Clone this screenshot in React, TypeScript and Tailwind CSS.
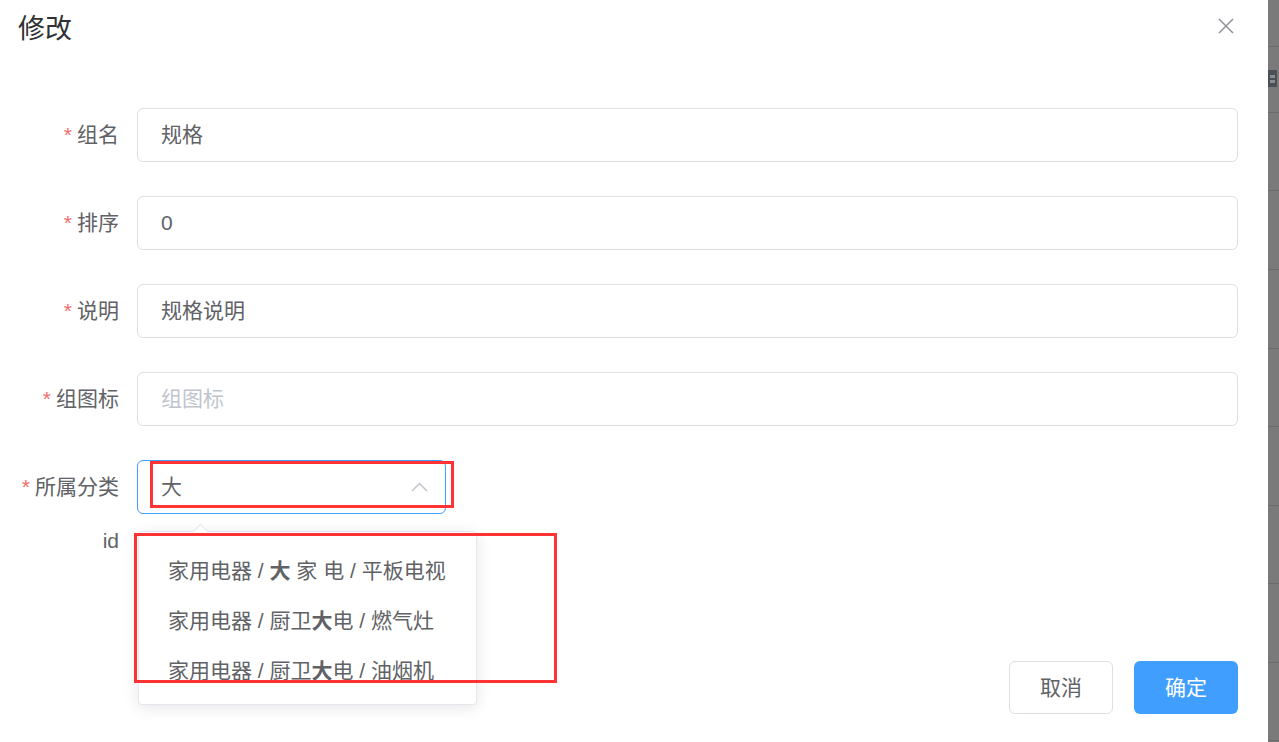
import React from "react";

const FONT = '"Liberation Sans", "Noto Sans CJK SC", sans-serif';

function Label({ text, required = true }: { text: string; required?: boolean }) {
  return (
    <div className="w-[137px] shrink-0 pr-[18px] flex items-center justify-end h-[54px] text-[21px] text-[#606266]">
      {required && <span className="text-[#F56C6C] mr-[5px]">*</span>}
      <span>{text}</span>
    </div>
  );
}

function InputRow({ label, value, placeholder }: { label: string; value?: string; placeholder?: string }) {
  return (
    <div className="flex h-[54px] mb-[34px]">
      <Label text={label} />
      <div className="flex-1 h-[54px] border border-[#DCDFE6] rounded-[6px] pl-[23px] flex items-center text-[21px]">
        {value ? (
          <span className="text-[#606266]">{value}</span>
        ) : (
          <span className="text-[#C0C4CC]">{placeholder}</span>
        )}
      </div>
    </div>
  );
}

export default function App() {
  const lines = [46, 112, 190, 269, 348, 426, 505, 583, 662, 740];
  const items = [
    [ "家用电器\u00a0/\u00a0", "大", "\u00a0家\u00a0电\u00a0/\u00a0平板电视" ],
    [ "家用电器\u00a0/\u00a0厨卫", "大", "电\u00a0/\u00a0燃气灶" ],
    [ "家用电器\u00a0/\u00a0厨卫", "大", "电\u00a0/\u00a0油烟机" ],
  ];
  return (
    <div className="w-[1279px] h-[742px] flex overflow-hidden bg-white" style={{ fontFamily: FONT }}>
      <div className="relative w-[1268px] h-full bg-white">
        <div className="h-[60px] pl-[18px] pt-[11px] text-[27px] leading-[36px] text-[#303133]">修改</div>
        <button className="absolute left-[1218px] top-[18px] w-[16px] h-[16px]">
          <svg width="16" height="16" viewBox="0 0 16 16">
            <path d="M1 1 L15 15 M15 1 L1 15" stroke="#909399" strokeWidth="1.5" fill="none" />
          </svg>
        </button>

        <div className="pt-[48px] pr-[30px]">
          <InputRow label="组名" value="规格" />
          <InputRow label="排序" value="0" />
          <InputRow label="说明" value="规格说明" />
          <InputRow label="组图标" placeholder="组图标" />
          <div className="flex h-[54px]">
            <Label text="所属分类" />
            <div className="w-[309px] h-[54px] border border-[#409EFF] rounded-[6px] pl-[23px] pr-[17px] flex items-center justify-between text-[21px] text-[#606266]">
              <span>大</span>
              <svg width="17" height="10" viewBox="0 0 17 10">
                <polyline points="1,9 8.5,1.5 16,9" stroke="#C0C4CC" strokeWidth="1.5" fill="none" />
              </svg>
            </div>
          </div>
          <div className="flex h-[54px]">
            <div className="w-[137px] shrink-0 pr-[18px] flex items-center justify-end h-[54px] text-[21px] text-[#606266]">
              id
            </div>
          </div>
          <div className="flex justify-end gap-[21px] mt-[93px]">
            <button className="w-[104px] h-[53px] border border-[#DCDFE6] rounded-[6px] bg-white text-[21px] text-[#606266]">
              取消
            </button>
            <button className="w-[104px] h-[53px] rounded-[6px] bg-[#409EFF] text-[21px] text-white">确定</button>
          </div>
        </div>

        {/* dropdown */}
        <div className="absolute left-[195px] top-[526px] w-[11px] h-[11px] rotate-45 bg-white border-l border-t border-[#E4E7ED] z-20" />
        <div className="absolute left-[138px] top-[531px] w-[339px] h-[174px] bg-white border border-[#E4E7ED] rounded-[4px] shadow-[0_3px_16px_rgba(0,0,0,0.1)] pt-[14px] z-10">
          {items.map((c, i) => (
            <div key={i} className="h-[50px] pl-[29px] flex items-center text-[21px] text-[#606266] whitespace-pre">
              <span>{c[0]}</span>
              <b className="font-bold">{c[1]}</b>
              <span>{c[2]}</span>
            </div>
          ))}
        </div>

        {/* annotation boxes */}
        <div className="absolute left-[150px] top-[461px] w-[304px] h-[47px] border-[3px] border-[#FF3333] z-30" />
        <div className="absolute left-[134px] top-[533px] w-[423px] h-[150px] border-[3px] border-[#FF3333] z-30" />
      </div>

      {/* background overlay strip */}
      <div className="relative w-[11px] h-full bg-[#7a7a7a]">
        {lines.map((y) => (
          <div key={y} className="absolute left-0 right-0 h-px bg-[#6c6c6c]" style={{ top: y }} />
        ))}
        <div className="absolute left-0 top-[70px] w-[9px] h-[17px] bg-[#4b4f56] flex flex-col justify-center gap-[2px] px-[2px]">
          <div className="h-[3px] bg-[#8a8d92]" />
          <div className="h-[3px] bg-[#8a8d92]" />
        </div>
      </div>
    </div>
  );
}
